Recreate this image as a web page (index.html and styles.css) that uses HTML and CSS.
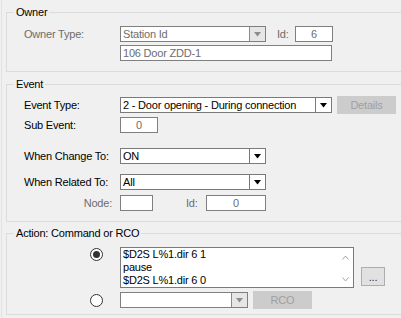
FILE: index.html
```html
<!DOCTYPE html>
<html>
<head>
<meta charset="utf-8">
<link rel="stylesheet" href="styles.css">
</head>
<body>
<div class="window">
  <fieldset class="group g-owner">
    <legend>Owner</legend>
    <div class="body">
      <div class="row h16">
        <span class="label dis">Owner Type:</span>
        <div class="combo dis w146">
          <span class="val">Station Id</span>
          <span class="btn"><svg width="7" height="5" viewBox="0 0 7 5"><polygon points="0,0 7,0 3.5,4.5"/></svg></span>
        </div>
        <span class="idlbl dis">Id:</span>
        <div class="box dis w38 center">6</div>
      </div>
      <div class="row h16 mt3">
        <span class="label"></span>
        <div class="box dis w212">106 Door ZDD-1</div>
      </div>
    </div>
  </fieldset>

  <fieldset class="group g-event">
    <legend>Event</legend>
    <div class="body">
      <div class="row h18">
        <span class="label">Event Type:</span>
        <div class="combo w212">
          <span class="val">2 - Door opening - During connection</span>
          <span class="btn"><svg width="7" height="5" viewBox="0 0 7 5"><polygon points="0,0 7,0 3.5,4.5"/></svg></span>
        </div>
        <button class="pbtn dis ml5 w59">Details</button>
      </div>
      <div class="row h16 mt3">
        <span class="label">Sub Event:</span>
        <div class="box dis w38 center">0</div>
      </div>
      <div class="row h16 mt15">
        <span class="label">When Change To:</span>
        <div class="combo w146">
          <span class="val">ON</span>
          <span class="btn"><svg width="7" height="5" viewBox="0 0 7 5"><polygon points="0,0 7,0 3.5,4.5"/></svg></span>
        </div>
      </div>
      <div class="row h16 mt10">
        <span class="label">When Related To:</span>
        <div class="combo w146">
          <span class="val">All</span>
          <span class="btn"><svg width="7" height="5" viewBox="0 0 7 5"><polygon points="0,0 7,0 3.5,4.5"/></svg></span>
        </div>
      </div>
      <div class="row h16 mt5">
        <span class="label dis right">Node:</span>
        <div class="box dis w33"></div>
        <span class="idlbl2 dis">Id:</span>
        <div class="box dis w60 center">0</div>
      </div>
    </div>
  </fieldset>

  <fieldset class="group g-action">
    <legend>Action: Command or RCO</legend>
    <div class="body">
      <div class="row top">
        <span class="label radiocell"><span class="radio checked"></span></span>
        <div class="memo">
          <div class="lines">
            <div>$D2S L%1.dir 6 1</div>
            <div>pause</div>
            <div>$D2S L%1.dir 6 0</div>
          </div>
          <div class="scroll">
            <svg width="7" height="5" viewBox="0 0 7 5"><polyline points="0.5,4.5 3.5,1 6.5,4.5"/></svg>
            <svg width="7" height="5" viewBox="0 0 7 5"><polyline points="0.5,0.5 3.5,4 6.5,0.5"/></svg>
          </div>
        </div>
        <button class="pbtn ell">...</button>
      </div>
      <div class="row h18 mt3">
        <span class="label radiocell2"><span class="radio"></span></span>
        <div class="combo dis w128">
          <span class="val"></span>
          <span class="btn"><svg width="7" height="5" viewBox="0 0 7 5"><polygon points="0,0 7,0 3.5,4.5"/></svg></span>
        </div>
        <button class="pbtn dis ml5 w59">RCO</button>
      </div>
    </div>
  </fieldset>
</div>
</body>
</html>
```

FILE: styles.css
```css
html, body {
  margin: 0;
  padding: 0;
}
body {
  background: #f0f0f0;
  font-family: "Liberation Sans", Arial, sans-serif;
  font-size: 11px;
  letter-spacing: -0.2px;
  color: #000;
  width: 401px;
  height: 318px;
  overflow: hidden;
}
.window {
  margin-left: 1px;
  border-left: 1px solid #e2e2e2;
  height: 318px;
  box-sizing: border-box;
  padding: 6px 0 0 4px;
}
.group {
  margin: 0;
  padding: 0;
  border: 1px solid #dcdcdc;
  border-right: none;
  min-width: 0;
  box-sizing: border-box;
}
.group legend {
  margin-left: 7px;
  padding: 0 2px;
  line-height: 13px;
  height: 13px;
}
.g-event { margin-top: 6px; }
.g-action { margin-top: 5px; }
.body {
  padding-left: 17px;
}
.g-owner .body { padding-top: 7px; padding-bottom: 10px; }
.g-event .body { padding-top: 5px; padding-bottom: 10px; }
.g-action .body { padding-top: 7px; padding-bottom: 5px; }

.row {
  display: flex;
  align-items: center;
}
.row.top { align-items: flex-start; }
.h16 { height: 16px; }
.h18 { height: 18px; }
.mt3 { margin-top: 3px; }
.mt5 { margin-top: 5px; }
.mt10 { margin-top: 10px; }
.mt15 { margin-top: 15px; }
.ml5 { margin-left: 5px; }

.label {
  width: 96px;
  flex: none;
  white-space: nowrap;
}
.label.right {
  text-align: right;
  box-sizing: border-box;
  padding-right: 8px;
}
.dis { color: #6d6d6d; }

.idlbl {
  margin-left: 11px;
  width: 18px;
  flex: none;
}
.idlbl2 {
  margin-left: 33px;
  width: 20px;
  flex: none;
}

.box, .combo {
  box-sizing: border-box;
  height: 16px;
  border: 1px solid #7a7a7a;
  background: #fff;
  line-height: 14px;
  padding: 0 2px;
  white-space: nowrap;
  overflow: hidden;
  flex: none;
}
.box.dis { background: #fff; border-color: #7f7f7f; }
.center { text-align: center; }
.w33 { width: 33px; }
.w38 { width: 38px; }
.w59 { width: 59px; }
.w60 { width: 60px; }
.w128 { width: 128px; }
.w146 { width: 146px; }
.w212 { width: 212px; }

.combo {
  display: flex;
  padding: 0;
}
.combo .val {
  flex: 1;
  padding-left: 2px;
  overflow: hidden;
}
.combo .btn {
  width: 15px;
  flex: none;
  border-left: 1px solid #7a7a7a;
  display: flex;
  align-items: center;
  justify-content: center;
  background: #fff;
}
.combo .btn svg { fill: #000; margin-top: 1px; }
.combo.dis { background: #fff; border-color: #7f7f7f; }
.combo.dis .btn { background: #e6e6e6; border-left-color: #8a8a8a; }
.combo.dis .btn svg { fill: #8c8c8c; }

.pbtn {
  font: inherit;
  letter-spacing: inherit;
  height: 18px;
  box-sizing: border-box;
  padding: 0;
  margin-top: 0;
  background: #cccccc;
  border: 1px solid #cccccc;
  color: #a0a0a0;
  flex: none;
  line-height: 16px;
}
.pbtn.ell {
  width: 24px;
  height: 19px;
  margin-left: 7px;
  margin-top: 20px;
  background: #e1e1e1;
  border: 1px solid #adadad;
  color: #333;
  line-height: 14px;
}

.radiocell, .radiocell2 {
  display: flex;
  justify-content: flex-end;
  box-sizing: border-box;
  padding-right: 17px;
}
.radiocell { padding-top: 1px; }
.radiocell2 { margin-top: 1px; }
.radio {
  width: 13px;
  height: 13px;
  box-sizing: border-box;
  border: 1px solid #333;
  border-radius: 50%;
  background: #fff;
  display: flex;
  align-items: center;
  justify-content: center;
}
.radio.checked::after {
  content: "";
  width: 7px;
  height: 7px;
  border-radius: 50%;
  background: #333;
}

.memo {
  width: 234px;
  height: 41px;
  box-sizing: border-box;
  border: 1px solid #7a7a7a;
  background: #fff;
  display: flex;
  flex: none;
}
.memo .lines {
  flex: 1;
  padding-left: 2px;
  line-height: 13px;
  white-space: nowrap;
}
.memo .scroll {
  width: 16px;
  flex: none;
  display: flex;
  flex-direction: column;
  justify-content: space-between;
  align-items: center;
  padding: 7px 0 5px;
  box-sizing: border-box;
}
.memo .scroll svg {
  fill: none;
  stroke: #a6a6a6;
  stroke-width: 1;
}
```
